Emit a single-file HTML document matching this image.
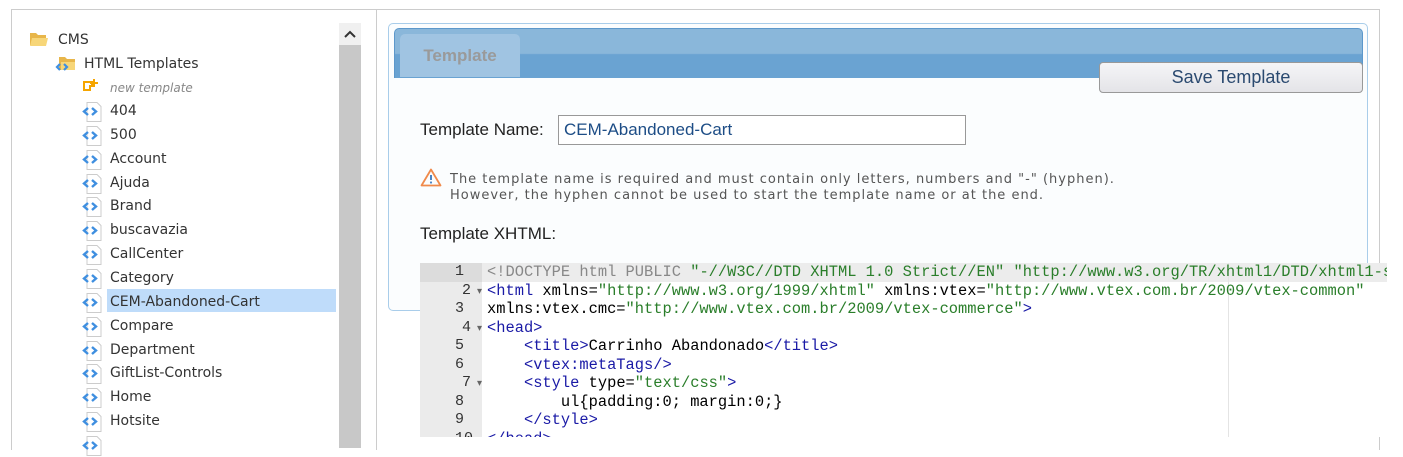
<!DOCTYPE html>
<html><head><style>
body{margin:0;width:1403px;height:448px;background:#fff;position:relative;overflow:hidden;font-family:"DejaVu Sans","Liberation Sans",sans-serif;}
.abs{position:absolute}
.item{position:absolute;left:82px;height:24px;font-size:14px;color:#333;line-height:24px}
.item .ic{position:absolute;left:0;top:3px;width:22px;height:20px}
.item span{position:absolute;left:28px;white-space:nowrap}
.code{position:absolute;left:420px;top:263px;width:967px;height:174px;background:#fff;overflow:hidden;font-family:"Liberation Mono",monospace;font-size:15.4px}
.ln{position:absolute;left:0;width:62px;height:18.5px;text-align:right;color:#333;line-height:18.5px;background:#ebebeb;font-size:15px}
.cl{position:absolute;left:67px;white-space:pre;line-height:18.5px;color:#000}
.t{color:#1a1aa6}.s{color:#2a7e2a}.g{color:#888}
</style></head><body>
<div class="abs" style="left:11px;top:9px;width:364px;height:440px;border:1px solid #ccc;border-bottom:none"></div>
<div class="abs" style="left:339px;top:23px;width:22px;height:425px;background:#c8c8c8"></div>
<div class="abs" style="left:339px;top:23px;width:22px;height:22px;background:#f0f0f0;text-align:center;font-size:13px;line-height:24px;color:#333">
<svg width="12" height="8" viewBox="0 0 12 8"><path d="M1 7L6 2L11 7" stroke="#333" stroke-width="2" fill="none"/></svg></div>
<svg class="abs" style="left:29px;top:31px" width="20" height="16" viewBox="0 0 20 16"><path d="M1 2h6l2 2h8v10H1z" fill="#e8b64a"/><path d="M3 7h16l-2 8H1z" fill="#f7d679"/></svg>
<div class="abs" style="left:58px;top:28px;font-size:14px;color:#333;line-height:24px">CMS</div>
<svg class="abs" style="left:55px;top:55px" width="22" height="18" viewBox="0 0 22 18"><path d="M4 2h6l2 2h8v11H4z" fill="#e8b64a"/><path d="M6 7h14v8H6z" fill="#f7d679"/><path d="M5 9l-3 3l3 3M9 9l3 3l-3 3" stroke="#3f8fe0" stroke-width="2.2" fill="none"/></svg>
<div class="abs" style="left:84px;top:52px;font-size:14px;color:#333;line-height:24px">HTML Templates</div>
<svg class="abs" style="left:83px;top:78px" width="16" height="16" viewBox="0 0 16 16"><path d="M1 4h8v4h-2v4H1z" fill="none" stroke="#f5a500" stroke-width="2"/><path d="M11 1v8M7 5h8" stroke="#f5a500" stroke-width="2"/></svg>
<div class="abs" style="left:110px;top:76px;font-size:12px;color:#888;font-style:italic;line-height:24px">new template</div>
<div class="abs" style="left:107px;top:289px;width:229px;height:23px;background:#bfdcfa"></div>
<div id="tree"></div>
<div class="abs" style="left:375px;top:9px;width:1004px;height:440px;border-top:1px solid #ccc;border-right:1px solid #ccc"></div>
<div class="abs" style="left:388px;top:23px;width:978px;height:286px;border:1px solid #a9cdea;border-radius:5px;background:#fbfdfe"></div>
<div class="abs" style="left:394px;top:28px;width:967px;height:49px;border-radius:5px 5px 0 0;background:linear-gradient(#8ab7da 0,#8ab7da 50%,#6aa3d2 52%,#6aa3d2 100%);border:1px solid #5d98cb;border-bottom:none"></div>
<div class="abs" style="left:400px;top:34px;width:120px;height:43px;border-radius:5px 5px 0 0;background:#a0c4e2;color:#9a9a9a;font-family:'Liberation Sans',sans-serif;font-weight:bold;font-size:17px;line-height:43px;text-align:center">Template</div>
<div class="abs" style="left:1099px;top:62px;width:262px;height:29px;border:1px solid #999;border-radius:4px;background:linear-gradient(#f5f5f7,#e4e4e8);font-family:'Liberation Sans',sans-serif;font-size:18px;color:#2b4a70;text-align:center;line-height:29px">Save Template</div>
<div class="abs" style="left:420px;top:120px;font-family:'Liberation Sans',sans-serif;font-size:17px;color:#222">Template Name:</div>
<div class="abs" style="left:558px;top:115px;font-family:'Liberation Sans',sans-serif;font-size:17px;color:#1d4d86;line-height:28px;padding-left:5px;box-sizing:border-box;width:408px;height:30px;border:1px solid #999;background:#fff">CEM-Abandoned-Cart</div>
<svg class="abs" style="left:420px;top:168px" width="22" height="19" viewBox="0 0 22 19"><path d="M11 1.5L20.5 17.5H1.5z" fill="none" stroke="#f08a4b" stroke-width="1.8" stroke-linejoin="round"/><path d="M11 7v5" stroke="#4a84c4" stroke-width="2"/><circle cx="11" cy="14.5" r="1.1" fill="#4a84c4"/></svg>
<div class="abs" style="left:450px;top:172px;font-size:13px;color:#555;line-height:16px;letter-spacing:1px;white-space:nowrap">The template name is required and must contain only letters, numbers and "-" (hyphen).<br>However, the hyphen cannot be used to start the template name or at the end.</div>
<div class="abs" style="left:420px;top:224px;font-family:'Liberation Sans',sans-serif;font-size:17px;color:#222">Template XHTML:</div>
<div class="code">
<div class="abs" style="left:0;top:0;width:62px;height:174px;background:#ebebeb"></div>
<div class="abs" style="left:62px;top:0;width:905px;height:18.5px;background:#ececec"></div>
<div class="abs" style="left:808px;top:0;width:1px;height:174px;background:#e4e4e4"></div>
<div class="ln" style="top:0;background:#dcdcdc">1&nbsp;&nbsp;</div>
<div class="ln" style="top:18.5px">2<span style="font-size:10px;color:#666"> ▾</span></div>
<div class="ln" style="top:37px">3&nbsp;&nbsp;</div>
<div class="ln" style="top:55.5px">4<span style="font-size:10px;color:#666"> ▾</span></div>
<div class="ln" style="top:74px">5&nbsp;&nbsp;</div>
<div class="ln" style="top:92.5px">6&nbsp;&nbsp;</div>
<div class="ln" style="top:111px">7<span style="font-size:10px;color:#666"> ▾</span></div>
<div class="ln" style="top:129.5px">8&nbsp;&nbsp;</div>
<div class="ln" style="top:148px">9&nbsp;&nbsp;</div>
<div class="ln" style="top:166.5px">10&nbsp;</div>
<div class="cl" style="top:0"><span class="g">&lt;!DOCTYPE html PUBLIC </span><span class="s">"-//W3C//DTD XHTML 1.0 Strict//EN" "http://www.w3.org/TR/xhtml1/DTD/xhtml1-strict.dtd"</span></div>
<div class="cl" style="top:18.5px"><span class="t">&lt;html</span> xmlns=<span class="s">"http://www.w3.org/1999/xhtml"</span> xmlns:vtex=<span class="s">"http://www.vtex.com.br/2009/vtex-common"</span></div>
<div class="cl" style="top:37px">xmlns:vtex.cmc=<span class="s">"http://www.vtex.com.br/2009/vtex-commerce"</span><span class="t">&gt;</span></div>
<div class="cl" style="top:55.5px"><span class="t">&lt;head&gt;</span></div>
<div class="cl" style="top:74px">    <span class="t">&lt;title&gt;</span>Carrinho Abandonado<span class="t">&lt;/title&gt;</span></div>
<div class="cl" style="top:92.5px">    <span class="t">&lt;vtex:metaTags/&gt;</span></div>
<div class="cl" style="top:111px">    <span class="t">&lt;style</span> type=<span class="s">"text/css"</span><span class="t">&gt;</span></div>
<div class="cl" style="top:129.5px">        ul{padding:0; margin:0;}</div>
<div class="cl" style="top:148px">    <span class="t">&lt;/style&gt;</span></div>
<div class="cl" style="top:166.5px"><span class="t">&lt;/head&gt;</span></div>
</div>
<script>
var n=["404","500","Account","Ajuda","Brand","buscavazia","CallCenter","Category","CEM-Abandoned-Cart","Compare","Department","GiftList-Controls","Home","Hotsite",""];
var h="";n.forEach(function(t,i){h+='<div class="item" style="top:'+(99+i*23.85)+'px"><svg class="ic" viewBox="0 0 22 20"><path d="M5 0.5h10l4 4v15H5z" fill="#fff" stroke="#ccc"/><path d="M6 6l-4 3.5l4 3.5M10 6l4 3.5l-4 3.5" stroke="#3f8fe0" stroke-width="2.4" fill="none"/></svg><span>'+t+'</span></div>';});
document.getElementById("tree").innerHTML=h;
</script>
</body></html>
